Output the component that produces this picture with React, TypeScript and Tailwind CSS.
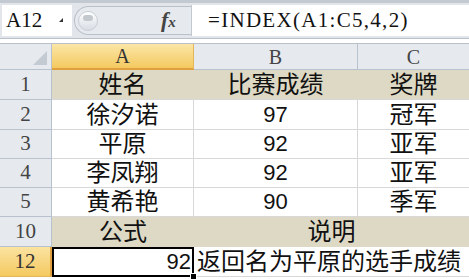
import React from "react";

const serif = { fontFamily: '"Liberation Serif", "DejaVu Serif", serif' };
const cell = { fontFamily: '"Liberation Sans", "Noto Sans CJK SC", sans-serif' };

const rows: { n: string; h: string; a: string; b: string; c: string; beige?: boolean }[] = [
  { n: "1", h: "h-[30px]", a: "姓名", b: "比赛成绩", c: "奖牌", beige: true },
  { n: "2", h: "h-[30px]", a: "徐汐诺", b: "97", c: "冠军" },
  { n: "3", h: "h-[29px]", a: "平原", b: "92", c: "亚军" },
  { n: "4", h: "h-[29px]", a: "李凤翔", b: "92", c: "亚军" },
  { n: "5", h: "h-[29px]", a: "黄希艳", b: "90", c: "季军" },
];

export default function App() {
  return (
    <div className="w-[469px] h-[279px] overflow-hidden bg-white relative">
      {/* formula bar */}
      <div className="h-[43px] bg-[#e2e6eb] border-t-[3px] border-[#c3c9d1] flex flex-col">
        <div className="flex h-[33px] pt-[2px]">
          <div className="w-[70px] ml-[2px] bg-white flex items-center relative">
            <span className="pl-[4px] text-[21px] text-[#111] leading-none" style={serif}>A12</span>
            <svg className="absolute left-[56px] top-[12px]" width="6" height="6" viewBox="0 0 6 6">
              <path d="M5 1 L5 5 L1 5 Z" fill="#333" />
            </svg>
          </div>
          <div className="w-[118px] ml-[1px] flex items-center relative">
            <div className="absolute left-[1px] top-[1px] bottom-[1px] right-[0px] rounded-l-full border border-[#b9c0c9] border-r-0 bg-[#e6e9ed]" />
            <div className="absolute left-[5px] top-[6px] w-[20px] h-[20px] rounded-full bg-gradient-to-b from-[#ffffff] to-[#d8dde3] border border-[#c9ced5]" />
            <div className="absolute left-[10px] top-[10px] w-[10px] h-[6px] rounded-full bg-[#c3c8cf]" />
            <span
              className="absolute left-[88px] top-[4px] text-[22px] italic font-bold text-[#444] leading-none"
              style={serif}
            >
              f<span className="text-[15px]">x</span>
            </span>
          </div>
          <div className="flex-1 bg-white border-l border-[#c3c9d1] flex items-center">
            <span className="pl-[16px] text-[21px] tracking-[1.3px] text-[#111] leading-none" style={serif}>
              =INDEX(A1:C5,4,2)
            </span>
          </div>
        </div>
        <div className="h-[5px] border-t border-[#b9c0c9] bg-white mt-[2px]" />
      </div>

      {/* grid */}
      <div className="grid grid-cols-[52px_142px_164px_111px] border-t border-[#b9c0c9]">
        {/* header row */}
        <div className="h-[26px] bg-[#e6eaef] border-r border-b border-[#b8c2cf] relative">
          <svg className="absolute right-[4px] bottom-[4px]" width="14" height="14" viewBox="0 0 14 14">
            <path d="M14 0 L14 14 L0 14 Z" fill="#c4cad2" />
          </svg>
        </div>
        <div
          className="h-[26px] bg-gradient-to-b from-[#fbe6a6] to-[#f4c95e] border-r border-b-2 border-r-[#e4b65a] border-b-[#e0a040] flex items-center justify-center text-[20px] text-[#333]"
          style={serif}
        >
          A
        </div>
        <div
          className="h-[26px] bg-[#e6eaef] border-r border-b border-[#b8c2cf] flex items-center justify-center text-[20px] text-[#444]"
          style={serif}
        >
          B
        </div>
        <div
          className="h-[26px] bg-[#e6eaef] border-b border-[#b8c2cf] flex items-center justify-center text-[20px] text-[#444]"
          style={serif}
        >
          C
        </div>

        {rows.map((r) => (
          <React.Fragment key={r.n}>
            <div
              className={`${r.h} bg-[#e6eaef] border-r border-b border-[#b8c2cf] flex items-center justify-center text-[21px] text-[#444]`}
              style={serif}
            >
              {r.n}
            </div>
            <div
              className={`${r.h} ${r.beige ? "bg-[#ddd9c4] border-r-[#ddd9c4]" : "bg-white border-r-[#d8d8d8]"} border-r border-b border-b-[#d8d8d8] flex items-center justify-center text-[24px] text-[#111] leading-none`}
              style={cell}
            >
              {r.a}
            </div>
            <div
              className={`${r.h} ${r.beige ? "bg-[#ddd9c4] border-r-[#ddd9c4]" : "bg-white border-r-[#d8d8d8]"} border-r border-b border-b-[#d8d8d8] flex items-center justify-center ${r.beige ? "text-[24px]" : "text-[22px]"} text-[#111] leading-none`}
              style={cell}
            >
              {r.b}
            </div>
            <div
              className={`${r.h} ${r.beige ? "bg-[#ddd9c4]" : "bg-white"} border-b border-[#d8d8d8] flex items-center justify-center text-[24px] text-[#111] leading-none`}
              style={cell}
            >
              {r.c}
            </div>
          </React.Fragment>
        ))}

        {/* row 10 */}
        <div
          className="h-[30px] bg-[#e6eaef] border-r border-b border-[#b8c2cf] flex items-center justify-center text-[21px] text-[#444]"
          style={serif}
        >
          10
        </div>
        <div
          className="h-[30px] bg-[#ddd9c4] flex items-center justify-center text-[24px] text-[#111] leading-none"
          style={cell}
        >
          公式
        </div>
        <div
          className="col-span-2 h-[30px] bg-[#ddd9c4] flex items-center justify-center text-[24px] text-[#111] leading-none"
          style={cell}
        >
          说明
        </div>

        {/* row 12 */}
        <div
          className="h-[30px] bg-gradient-to-b from-[#fbe3a0] to-[#f4c95e] border-r-2 border-b border-r-[#e0a040] border-b-[#e4b65a] flex items-center justify-center text-[21px] text-[#333]"
          style={serif}
        >
          12
        </div>
        <div
          className="h-[30px] bg-white border-2 border-black flex items-center justify-end pr-[1px] text-[22px] text-[#111] leading-none relative"
          style={cell}
        >
          92
          <div className="absolute right-[-5px] bottom-[-5px] w-[7px] h-[7px] bg-black border border-white" />
        </div>
        <div
          className="col-span-2 h-[30px] bg-white border-b border-[#d8d8d8] flex items-center pl-[3px] text-[24px] text-[#111] leading-none whitespace-nowrap"
          style={cell}
        >
          返回名为平原的选手成绩
        </div>
      </div>
    </div>
  );
}
